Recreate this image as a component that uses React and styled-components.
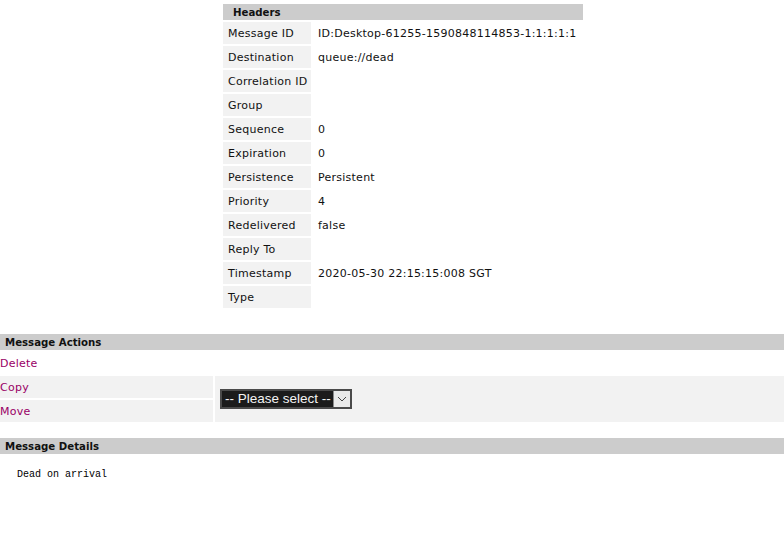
import React from "react";
import styled, { createGlobalStyle } from "styled-components";

const Global = createGlobalStyle`
  html, body { margin: 0; padding: 0; background: #ffffff; }
  body {
    font-family: "DejaVu Sans", Verdana, sans-serif;
    font-size: 11px;
    color: #000;
  }
`;

const Page = styled.div`
  width: 784px;
  display: flex;
  flex-direction: column;
`;

const HeadersGrid = styled.div`
  margin: 4px 0 0 223px;
  display: grid;
  grid-template-columns: 88px 270px;
  gap: 2px;
`;

const SectionHead = styled.div`
  grid-column: 1 / -1;
  box-sizing: border-box;
  height: 16px;
  padding-top: 1px;
  line-height: 16px;
  background: #cccccc;
  font-weight: bold;
  font-size: 10.2px;
  padding-left: ${(p) => p.$indent}px;
  color: #111;
`;

const cellText = `
  box-sizing: border-box;
  height: 22px;
  padding-top: 2px;
  line-height: 20px;
  white-space: nowrap;
  letter-spacing: 0.25px;
`;

const Label = styled.div`
  ${cellText}
  padding-left: 5px;
  background: #f2f2f2;
  color: #111;
`;

const Value = styled.div`
  ${cellText}
  padding-left: 5px;
  color: #111;
`;

const ActionsGrid = styled.div`
  margin-top: 26px;
  display: grid;
  grid-template-columns: 213px 1fr;
  gap: 2px;
`;

const ActionCell = styled.div`
  grid-column: 1;
  ${cellText}
  background: ${(p) => (p.$shaded ? "#f2f2f2" : "transparent")};
`;

const Link = styled.a`
  color: #990066;
  text-decoration: none;
`;

const SelectCell = styled.div`
  grid-column: 2;
  grid-row: 3 / span 2;
  background: #f2f2f2;
  display: flex;
  align-items: center;
  padding-left: 5px;
`;

const SelectBox = styled.div`
  display: inline-flex;
  align-items: stretch;
  height: 20px;
  box-sizing: border-box;
  border: 2px solid #4a4a4a;
  background: #1b1b1b;
`;

const SelectText = styled.span`
  font-family: "Liberation Sans", Arial, sans-serif;
  font-size: 13.5px;
  line-height: 16px;
  color: #f4f4f4;
  padding: 0 2px 0 3px;
  white-space: nowrap;
`;

const ArrowBox = styled.span`
  width: 16px;
  background: #e9e9e9;
  border-left: 1px solid #8a8a8a;
  display: flex;
  align-items: center;
  justify-content: center;
`;

const DetailsHead = styled.div`
  margin-top: 16px;
  box-sizing: border-box;
  height: 16px;
  padding-top: 1px;
  line-height: 16px;
  background: #cccccc;
  font-weight: bold;
  font-size: 10.2px;
  padding-left: 5px;
  color: #111;
`;

const Pre = styled.pre`
  margin: 0;
  padding: 15px 0 0 17px;
  font-family: "Liberation Mono", "Courier New", monospace;
  font-size: 10px;
  line-height: 12px;
  color: #000;
`;

const headers = [
  ["Message ID", "ID:Desktop-61255-1590848114853-1:1:1:1:1"],
  ["Destination", "queue://dead"],
  ["Correlation ID", ""],
  ["Group", ""],
  ["Sequence", "0"],
  ["Expiration", "0"],
  ["Persistence", "Persistent"],
  ["Priority", "4"],
  ["Redelivered", "false"],
  ["Reply To", ""],
  ["Timestamp", "2020-05-30 22:15:15:008 SGT"],
  ["Type", ""],
];

export default function App() {
  return (
    <Page>
      <Global />
      <HeadersGrid>
        <SectionHead $indent={10}>Headers</SectionHead>
        {headers.map(([k, v]) => (
          <React.Fragment key={k}>
            <Label>{k}</Label>
            <Value>{v}</Value>
          </React.Fragment>
        ))}
      </HeadersGrid>

      <ActionsGrid>
        <SectionHead $indent={5}>Message Actions</SectionHead>
        <ActionCell>
          <Link href="#">Delete</Link>
        </ActionCell>
        <ActionCell $shaded>
          <Link href="#">Copy</Link>
        </ActionCell>
        <ActionCell $shaded>
          <Link href="#">Move</Link>
        </ActionCell>
        <SelectCell>
          <SelectBox>
            <SelectText>-- Please select --</SelectText>
            <ArrowBox>
              <svg width="10" height="6" viewBox="0 0 10 6">
                <path d="M1 1 L5 5 L9 1" fill="none" stroke="#444" strokeWidth="1" />
              </svg>
            </ArrowBox>
          </SelectBox>
        </SelectCell>
      </ActionsGrid>

      <DetailsHead>Message Details</DetailsHead>
      <Pre>Dead on arrival</Pre>
    </Page>
  );
}
